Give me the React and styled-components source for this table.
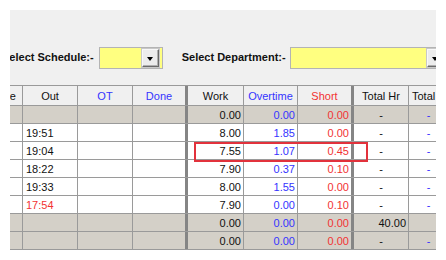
import React from 'react';
import styled, { createGlobalStyle } from 'styled-components';

const Global = createGlobalStyle`
  html, body { margin: 0; padding: 0; background: #ffffff; }
  body { font-family: "Liberation Sans", Arial, sans-serif; }
`;

const Viewport = styled.div`
  margin: 10px 0 0 10px;
  width: 426px;
  height: 240px;
  overflow: hidden;
  background: #f0f0f0;
`;

const Pane = styled.div`
  margin-left: -42px;
  width: 620px;
`;

const Toolbar = styled.div`
  box-sizing: border-box;
  height: 75px;
  padding: 37px 0 0 34px;
  display: flex;
  align-items: flex-start;
`;

const Label = styled.span`
  font-size: 11px;
  line-height: 21px;
  font-weight: bold;
  color: #111;
  white-space: nowrap;
  margin-left: ${(p) => p.$gap || 0}px;
`;

const Combo = styled.div`
  box-sizing: border-box;
  width: ${(p) => p.$w}px;
  height: 22px;
  margin-left: ${(p) => p.$gap}px;
  border: 1px solid #b4b4b4;
  background: #ffff80;
  display: flex;
  justify-content: flex-end;
  align-items: center;
  padding-right: 3px;
  flex-shrink: 0;
`;

const ComboButton = styled.div`
  box-sizing: border-box;
  width: 17px;
  height: 18px;
  background: #ececec;
  border: 1px solid #f8f8f8;
  border-right-color: #6a6a6a;
  border-bottom-color: #6a6a6a;
  box-shadow: inset -1px -1px 0 #b0b0b0, 0 0 0 1px #c8c8c8;
  display: flex;
  align-items: center;
  justify-content: center;
`;

const Arrow = styled.div`
  width: 0;
  height: 0;
  border-left: 3.5px solid transparent;
  border-right: 3.5px solid transparent;
  border-top: 4px solid #000;
  margin-top: 1px;
`;

const Grid = styled.div`
  position: relative;
  font-size: 11px;
`;

const Row = styled.div`
  display: flex;
  height: ${(p) => (p.$head ? 19 : 17)}px;
  border-bottom: 1px solid #9a9a9a;
  border-top: ${(p) => (p.$head ? '1px solid #9a9a9a' : 'none')};
  background: ${(p) => (p.$head ? '#f0f0f0' : p.$gray ? '#d4d0c8' : '#ffffff')};
`;

const Cell = styled.div`
  box-sizing: border-box;
  flex: 0 0 ${(p) => p.$w}px;
  width: ${(p) => p.$w}px;
  border-right: ${(p) => (p.$double ? '3px solid' : '1px solid #9a9a9a')};
  ${(p) =>
    p.$double
      ? 'border-image: linear-gradient(to right, #858585 34%, #c4c4c4 34%, #c4c4c4 66%, #858585 66%) 1;'
      : ''}
  display: flex;
  align-items: center;
  justify-content: ${(p) =>
    p.$align === 'left' ? 'flex-start' : p.$align === 'right' ? 'flex-end' : 'center'};
  padding: ${(p) =>
    p.$align === 'left'
      ? `0 0 0 ${p.$pad ?? 3}px`
      : p.$align === 'right'
      ? `0 ${p.$pad ?? 2}px 0 0`
      : '0'};
  color: ${(p) => p.$color || '#111'};
  white-space: nowrap;
  overflow: hidden;
`;

const Highlight = styled.div`
  position: absolute;
  left: 226px;
  top: 57px;
  width: 174px;
  height: 20px;
  box-sizing: border-box;
  border: 2px solid #e2323c;
  pointer-events: none;
`;

const BLUE = '#3434ff';
const RED = '#f23232';
const BLACK = '#111';

const cols = [
  { key: 'tin', w: 55, head: 'Time', hc: BLACK, halign: 'right', hpad: 6 },
  { key: 'out', w: 55, head: 'Out', hc: BLACK, align: 'left', color: BLACK },
  { key: 'otc', w: 55, head: 'OT', hc: BLUE },
  { key: 'done', w: 55, head: 'Done', hc: BLUE, double: true },
  { key: 'work', w: 56, head: 'Work', hc: BLACK, align: 'right', color: BLACK },
  { key: 'ot', w: 54, head: 'Overtime', hc: BLUE, align: 'right', color: BLUE },
  { key: 'short', w: 56, head: 'Short', hc: RED, align: 'right', color: RED, double: true },
  { key: 'tot', w: 55, head: 'Total Hr', hc: BLACK, color: BLACK },
  { key: 'tot2', w: 40, head: 'Total OT', hc: BLACK, color: BLUE, halign: 'left' },
];

const rows = [
  { gray: true, out: '', work: '0.00', ot: '0.00', short: '0.00', tot: '-', tot2: '-' },
  { out: '19:51', work: '8.00', ot: '1.85', short: '0.00', tot: '-', tot2: '-' },
  { out: '19:04', work: '7.55', ot: '1.07', short: '0.45', tot: '-', tot2: '-' },
  { out: '18:22', work: '7.90', ot: '0.37', short: '0.10', tot: '-', tot2: '-' },
  { out: '19:33', work: '8.00', ot: '1.55', short: '0.00', tot: '-', tot2: '-' },
  { out: '17:54', outRed: true, work: '7.90', ot: '0.00', short: '0.10', tot: '-', tot2: '-' },
  { gray: true, out: '', work: '0.00', ot: '0.00', short: '0.00', tot: '40.00', totRight: true, tot2: '' },
  { gray: true, out: '', work: '0.00', ot: '0.00', short: '0.00', tot: '-', tot2: '-' },
];

export default function App() {
  return (
    <>
      <Global />
      <Viewport>
        <Pane>
          <Toolbar>
            <Label>Select Schedule:-</Label>
            <Combo $w={64} $gap={5}>
              <ComboButton>
                <Arrow />
              </ComboButton>
            </Combo>
            <Label $gap={19}>Select Department:-</Label>
            <Combo $w={158} $gap={4}>
              <ComboButton>
                <Arrow />
              </ComboButton>
            </Combo>
          </Toolbar>
          <Grid>
            <Row $head>
              {cols.map((c) => (
                <Cell
                  key={c.key}
                  $w={c.w}
                  $double={c.double}
                  $color={c.hc}
                  $align={c.halign || 'center'}
                  $pad={c.hpad}
                >
                  {c.head}
                </Cell>
              ))}
            </Row>
            {rows.map((r, i) => (
              <Row key={i} $gray={r.gray}>
                {cols.map((c) => {
                  let color = c.color;
                  let align = c.align;
                  if (c.key === 'out' && r.outRed) color = RED;
                  if (c.key === 'tot' && r.totRight) align = 'right';
                  return (
                    <Cell key={c.key} $w={c.w} $double={c.double} $color={color} $align={align}>
                      {r[c.key] || ''}
                    </Cell>
                  );
                })}
              </Row>
            ))}
            <Highlight />
          </Grid>
        </Pane>
      </Viewport>
    </>
  );
}
